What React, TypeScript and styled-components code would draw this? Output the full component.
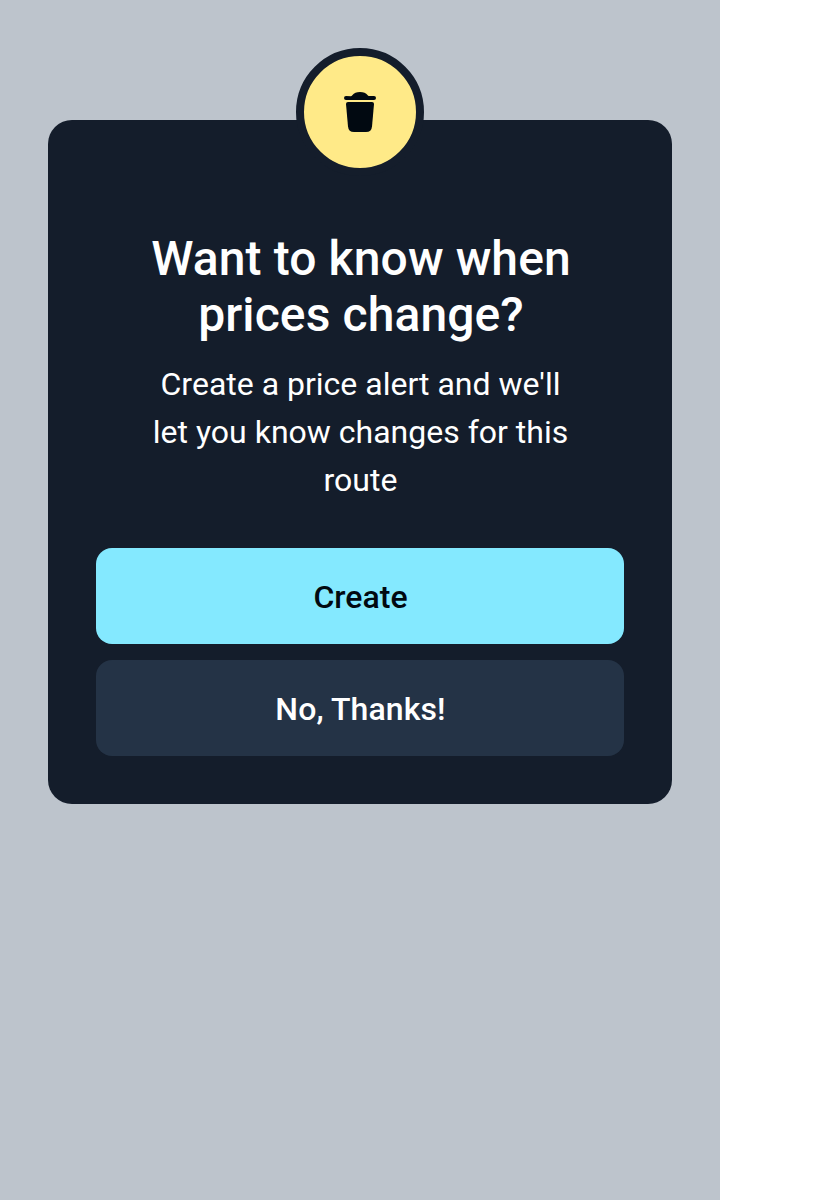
import React from "react";
import styled, { createGlobalStyle } from "styled-components";

const GlobalStyle = createGlobalStyle`
  *, *::before, *::after { box-sizing: border-box; }
  body { margin: 0; background: #ffffff; font-family: Roboto, sans-serif; }
`;

const Backdrop = styled.main`
  width: 720px;
  min-height: 1200px;
  padding: 120px 48px 0;
  background: #bdc4cc;
`;

const Dialog = styled.section`
  position: relative;
  display: flex;
  flex-direction: column;
  padding: 111px 48px 48px;
  border-radius: 24px;
  background: #141d2b;
  color: #ffffff;
  text-align: center;
`;

const Badge = styled.div`
  position: absolute;
  top: -72px;
  left: 50%;
  display: flex;
  align-items: center;
  justify-content: center;
  width: 128px;
  height: 128px;
  border: 8px solid #141d2b;
  border-radius: 50%;
  background: #ffea88;
  transform: translateX(-50%);
`;

const Copy = styled.div`
  padding: 0 47px 0 48px;
`;

const Title = styled.h1`
  margin: 0;
  padding-left: 1px;
  font-size: 48px;
  font-weight: 500;
  line-height: 56px;
  letter-spacing: 0.1px;
`;

const Message = styled.p`
  margin: 17px 0 0;
  font-size: 32px;
  line-height: 48px;
`;

const Actions = styled.div`
  display: flex;
  flex-direction: column;
  gap: 16px;
  margin-top: 44px;
`;

const Button = styled.button<{ $primary?: boolean }>`
  height: 96px;
  padding: 2px 0 0 1px;
  border: 0;
  border-radius: 16px;
  background: ${(p) => (p.$primary ? "#84e9ff" : "#243346")};
  color: ${(p) => (p.$primary ? "#010911" : "#ffffff")};
  font: 500 32px/48px Roboto, sans-serif;
  letter-spacing: ${(p) => (p.$primary ? "0" : "0.1px")};
`;

function TrashIcon() {
  return (
    <svg width="48" height="48" viewBox="0 0 48 48" fill="#010911" aria-hidden="true">
      <path d="M15 4.2 Q16 4 16.5 3 C18 1 20.5 0 24 0 C27.500 0 30 1 31.500 3 Q32 4 33 4 H38 A2 2 0 0 1 38 8 H10 A2 2 0 0 1 10 4 Z" transform="translate(0 4)" />
      <path d="M12 14 H36 Q38 14 38 16 L36 38.500 Q35.500 44 30 44 H18 Q12.500 44 12 38.500 L10 16 Q10 14 12 14 Z" />
    </svg>
  );
}

export default function App() {
  return (
    <>
      <GlobalStyle />
      <Backdrop>
        <Dialog role="dialog" aria-labelledby="dialog-title">
          <Badge><TrashIcon /></Badge>
          <Copy>
            <Title id="dialog-title">Want to know when prices change?</Title>
            <Message>Create a price alert and we'll let you know changes for this route</Message>
          </Copy>
          <Actions>
            <Button $primary>Create</Button>
            <Button>No, Thanks!</Button>
          </Actions>
        </Dialog>
      </Backdrop>
    </>
  );
}
